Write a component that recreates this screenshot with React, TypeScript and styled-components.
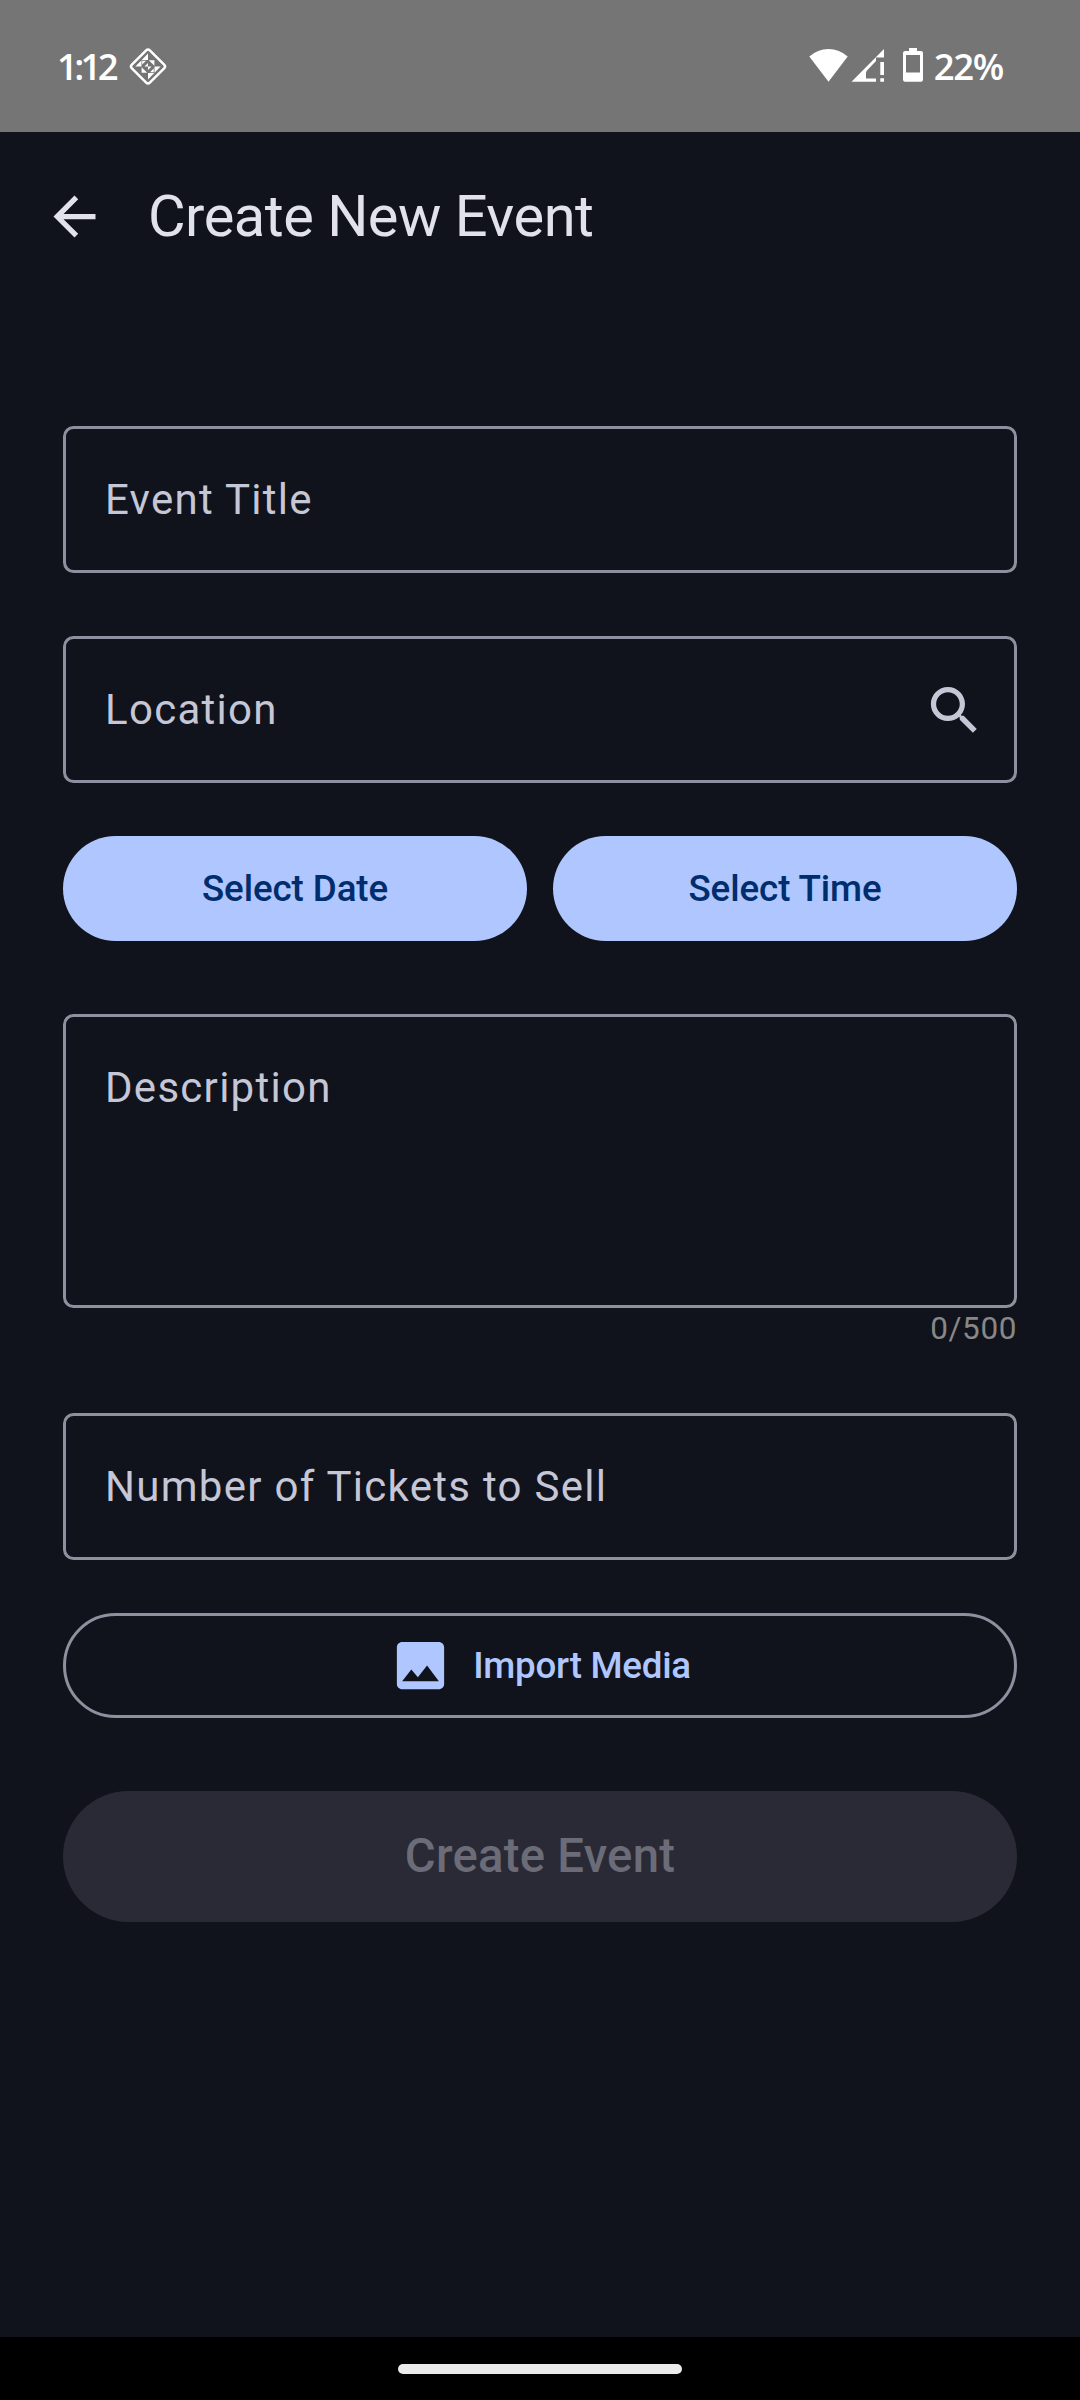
import React from "react";
import styled, { createGlobalStyle } from "styled-components";

const colors = {
  background: "#10131b",
  onSurface: "#e1e2ec",
  onSurfaceVariant: "#c5c6d6",
  outline: "#8f909f",
  primary: "#afc6ff",
  onPrimary: "#002d6d",
  disabled: "#292a35",
  onDisabled: "#6b6c78",
};

const GlobalStyle = createGlobalStyle`
  *, *::before, *::after { box-sizing: border-box; }
  body {
    margin: 0;
    background: ${colors.background};
    font-family: Roboto, "Liberation Sans", sans-serif;
  }
  button { font: inherit; border: 0; margin: 0; padding: 0; background: none; }
  svg { display: block; flex: none; }
`;

const Screen = styled.div`
  width: 1080px;
  height: 2400px;
  display: flex;
  flex-direction: column;
  overflow: hidden;
  background: ${colors.background};
`;

const StatusBar = styled.header`
  height: 132px;
  padding: 0 77px 0 57px;
  display: flex;
  align-items: center;
  justify-content: space-between;
  background: #757575;
  color: #fff;
`;

const StatusGroup = styled.div<{ $gap: number }>`
  display: flex;
  align-items: center;
  gap: ${(p) => p.$gap}px;
`;

const StatusText = styled.span<{ $spacing: number }>`
  padding-bottom: 1px;
  font-family: "Open Sans", "Noto Sans", sans-serif;
  font-size: 36.5px;
  font-weight: 600;
  line-height: 44px;
  letter-spacing: ${(p) => p.$spacing}px;
`;

const AppBar = styled.nav`
  height: 168px;
  padding-left: 43px;
  display: flex;
  align-items: center;
  gap: 42px;
`;

const IconButton = styled.button<{ $tone?: string }>`
  color: ${(p) => p.$tone ?? colors.onSurface};
`;

const Title = styled.h1`
  margin: 0;
  font-size: 57.75px;
  font-weight: 400;
  line-height: 74px;
  letter-spacing: -0.48px;
  color: ${colors.onSurface};
`;

const Form = styled.main`
  flex: 1;
  padding: 126px 63px 0;
  display: flex;
  flex-direction: column;
`;

const Field = styled.div<{ $tall?: boolean; $top?: number }>`
  height: ${(p) => (p.$tall ? 294 : 147)}px;
  margin-top: ${(p) => p.$top ?? 0}px;
  padding: 39px 28px 39px 39px;
  display: flex;
  align-items: flex-start;
  justify-content: space-between;
  border: 3px solid ${colors.outline};
  border-radius: 10.5px;
  color: ${colors.onSurfaceVariant};

  ${IconButton} {
    margin-top: 1px;
  }
`;

const Label = styled.span`
  font-size: 42px;
  line-height: 63px;
  letter-spacing: 1.28px;
`;

const ButtonRow = styled.div`
  margin-top: 53px;
  display: flex;
  gap: 26px;
`;

const PillButton = styled.button<{ $outlined?: boolean }>`
  flex: 1;
  height: 105px;
  display: flex;
  align-items: center;
  justify-content: center;
  gap: 21px;
  border: ${(p) => (p.$outlined ? `3px solid ${colors.outline}` : "0")};
  border-radius: 52.5px;
  background: ${(p) => (p.$outlined ? "transparent" : colors.primary)};
  color: ${(p) => (p.$outlined ? colors.primary : colors.onPrimary)};
  font-size: 36.75px;
  font-weight: 500;
  letter-spacing: ${(p) => (p.$outlined ? -0.28 : -0.1)}px;
`;

const Counter = styled.span`
  align-self: flex-end;
  font-size: 31.5px;
  line-height: 42px;
  letter-spacing: 0.6px;
  color: #888;
`;

const SubmitButton = styled.button`
  height: 131px;
  margin-top: 73px;
  padding-bottom: 1px;
  border-radius: 65.5px;
  background: ${colors.disabled};
  color: ${colors.onDisabled};
  font-size: 47.25px;
  font-weight: 500;
  letter-spacing: 0.2625px;
`;

const NavigationBar = styled.footer`
  height: 63px;
  padding-top: 27px;
  display: flex;
  justify-content: center;
  background: #000;
`;

const HomeHandle = styled.div`
  width: 284px;
  height: 10px;
  border-radius: 5px;
  background: #ebebeb;
`;

const MaterialIcon = ({ d }: { d: string }) => (
  <svg width="63" height="63" viewBox="0 0 24 24" fill="currentColor">
    <path d={d} />
  </svg>
);

const ARROW_BACK = "M20 11H7.83l5.59-5.59L12 4l-8 8 8 8 1.41-1.41L7.83 13H20v-2z";
const SEARCH =
  "M15.5 14h-.79l-.28-.27C15.41 12.59 16 11.11 16 9.5 16 5.91 13.09 3 9.5 3S3 5.91 3 9.5 5.91 16 9.5 16c1.61 0 3.09-.59 4.23-1.57l.27.28v.79l5 4.99L20.49 19l-4.99-5zm-6 0C7.01 14 5 11.99 5 9.5S7.01 5 9.5 5 14 7.01 14 9.5 11.99 14 9.5 14z";
const IMAGE =
  "M21 19V5c0-1.1-.9-2-2-2H5c-1.1 0-2 .9-2 2v14c0 1.1.9 2 2 2h14c1.1 0 2-.9 2-2zM8.5 13.5l2.5 3.01L14.5 12l4.5 6H5l3.5-4.5z";

const DiamondIcon = () => (
  <svg width="38" height="38" viewBox="-19 -19.5 38 38" fill="#fff">
    <rect
      x="-12.7"
      y="-12.7"
      width="25.4"
      height="25.4"
      rx="2.6"
      transform="rotate(45)"
      fill="none"
      stroke="#fff"
      strokeWidth="2.5"
    />
    {[0, 180].map((angle) => (
      <g key={angle} transform={`rotate(${angle})`}>
        <path d="M0-13V-6.5H-6.3Z" />
        <path d="M-12.7 0H-6.5V-6.2Z" />
        <path d="M.8-6.3H6.4V-.8Z" />
        <path d="M-5.8-5.8H-2L-5.8-2Z" />
        <path d="M0 0V-3.6L-3.6 0Z" />
      </g>
    ))}
  </svg>
);

const StatusIcons = () => (
  <svg width="116" height="36" viewBox="0 1 116 36" fill="#fff">
    <path d="M.3 9.6Q8.5 2 19.5 2T38.7 9.6L19.5 34.7Z" />
    <path d="M75 2V10.5H67V14L58 23.5Q57 24.5 57 26V31.5H67V34.7H42.5Z" />
    <path d="M71.3 15H75V28H71.3ZM71.3 31.3H75V34.7H71.3Z" />
    <path
      fillRule="evenodd"
      d="M100 1H108V4H112Q114 4 114 6V32.5Q114 34.7 112 34.7H96Q94 34.7 94 32.5V6Q94 4 96 4H100ZM97 8V25.6H111V8Z"
    />
  </svg>
);

export default function App() {
  return (
    <Screen>
      <GlobalStyle />
      <StatusBar>
        <StatusGroup $gap={14}>
          <StatusText $spacing={-3.7}>1:12</StatusText>
          <DiamondIcon />
        </StatusGroup>
        <StatusGroup $gap={9}>
          <StatusIcons />
          <StatusText $spacing={-1.3}>22%</StatusText>
        </StatusGroup>
      </StatusBar>

      <AppBar>
        <IconButton aria-label="Back">
          <MaterialIcon d={ARROW_BACK} />
        </IconButton>
        <Title>Create New Event</Title>
      </AppBar>

      <Form>
        <Field>
          <Label>Event Title</Label>
        </Field>
        <Field $top={63}>
          <Label>Location</Label>
          <IconButton aria-label="Search" $tone={colors.onSurfaceVariant}>
            <MaterialIcon d={SEARCH} />
          </IconButton>
        </Field>
        <ButtonRow>
          <PillButton>Select Date</PillButton>
          <PillButton>Select Time</PillButton>
        </ButtonRow>
        <Field $tall $top={73}>
          <Label>Description</Label>
        </Field>
        <Counter>0/500</Counter>
        <Field $top={63}>
          <Label>Number of Tickets to Sell</Label>
        </Field>
        <ButtonRow>
          <PillButton $outlined>
            <MaterialIcon d={IMAGE} />
            Import Media
          </PillButton>
        </ButtonRow>
        <SubmitButton disabled>Create Event</SubmitButton>
      </Form>

      <NavigationBar>
        <HomeHandle />
      </NavigationBar>
    </Screen>
  );
}
